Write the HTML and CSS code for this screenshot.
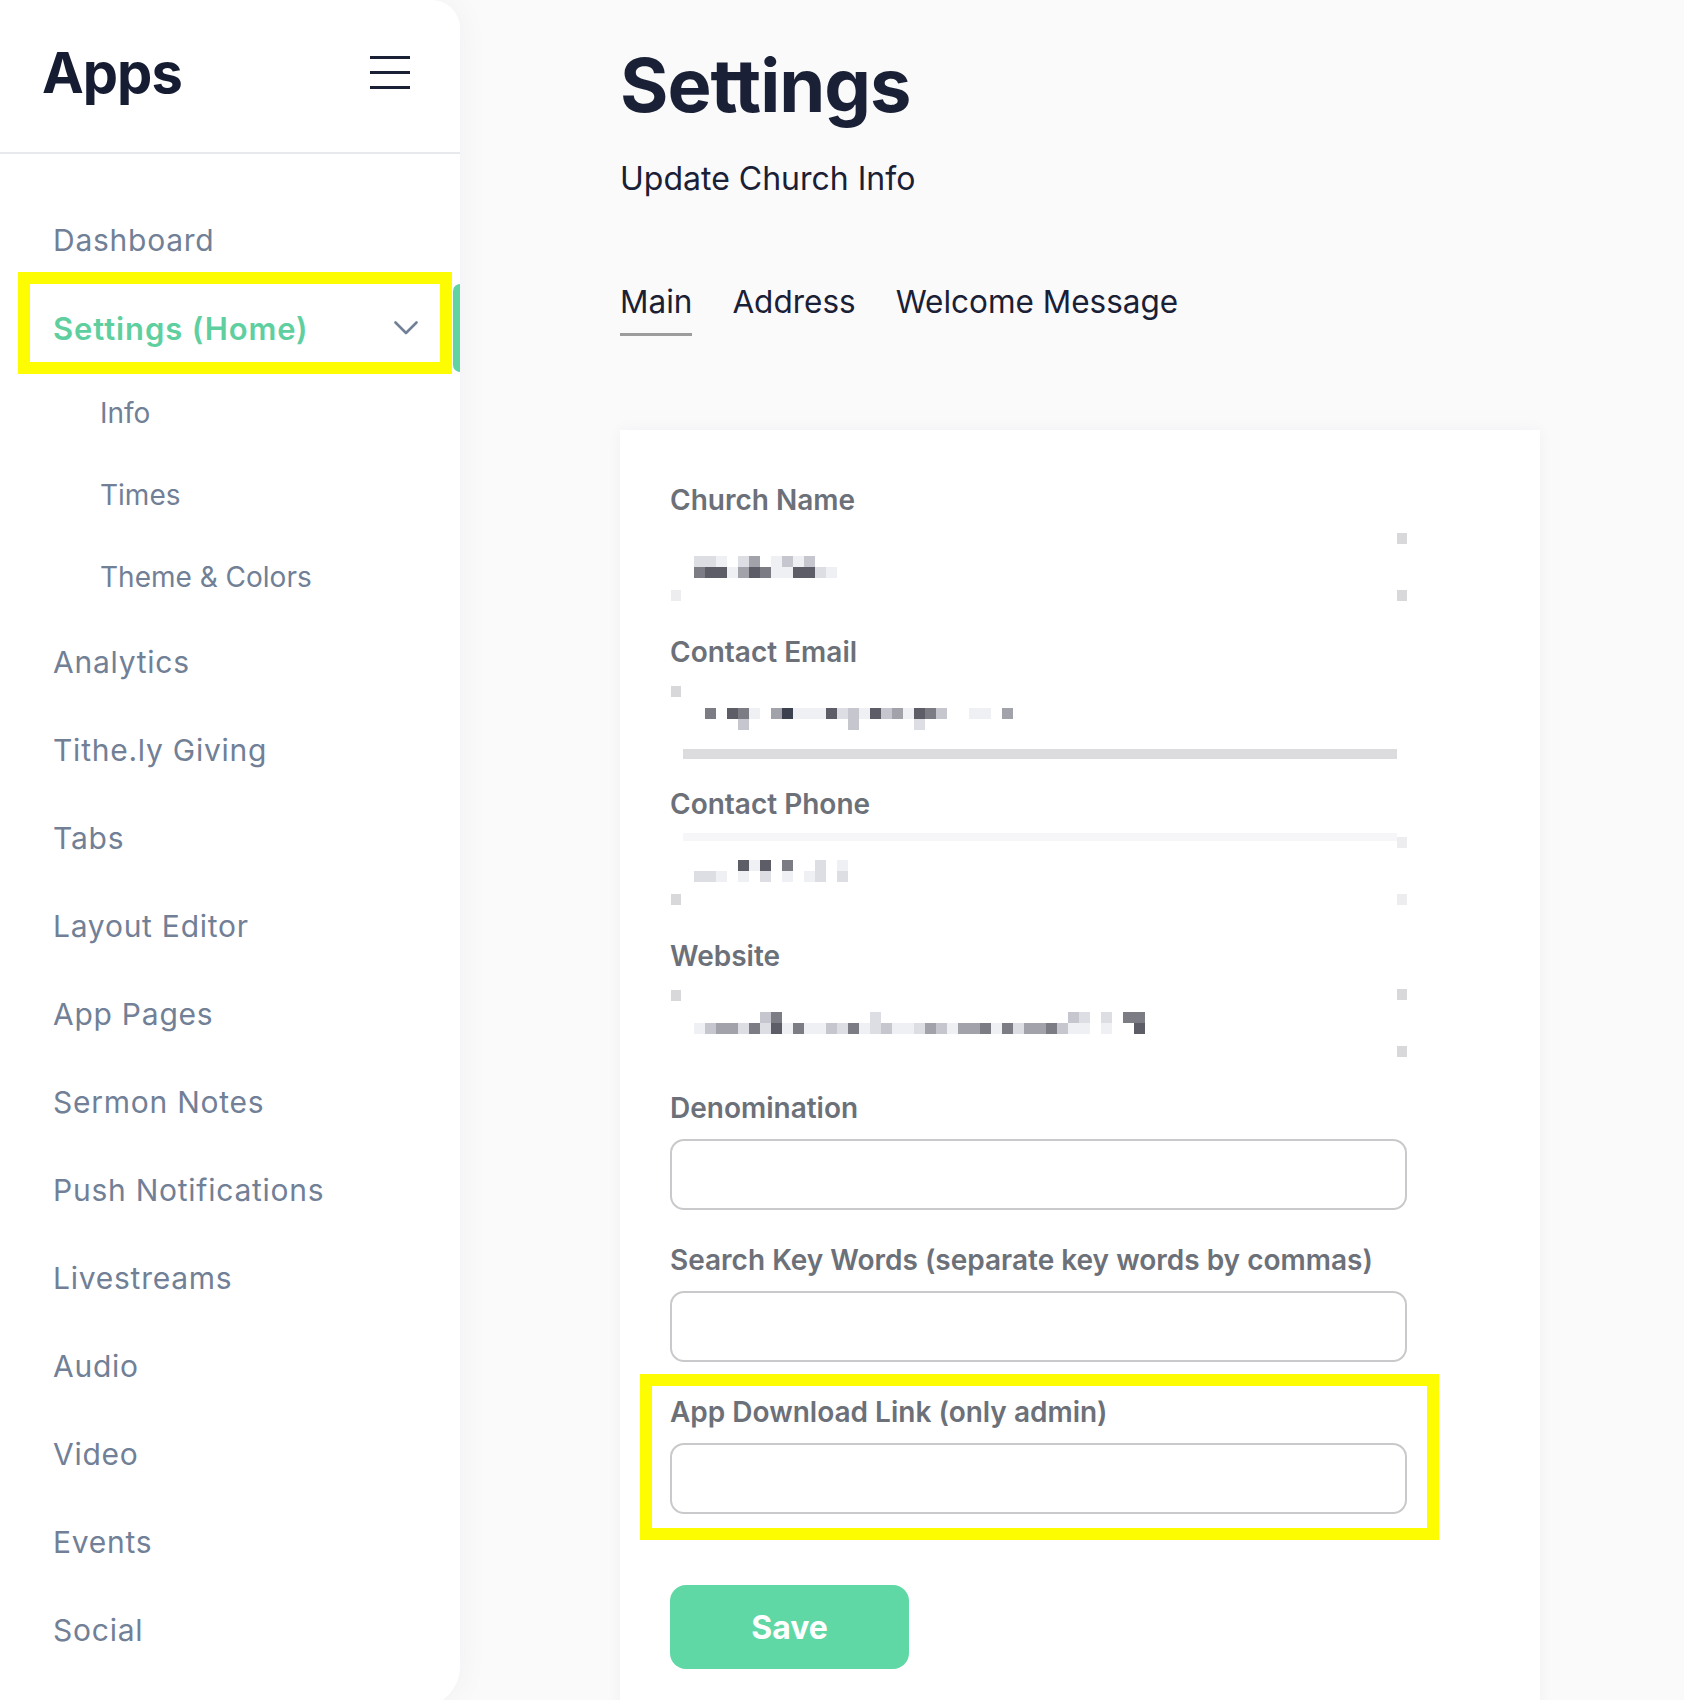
FILE: index.html
```html
<!DOCTYPE html>
<html lang="en">
<head>
  <meta charset="UTF-8">
  <title>Settings - Apps</title>
  <link rel="stylesheet" href="styles.css">
</head>
<body>
  <div id="sidebar">
    <div class="side-head">
      <h1>Apps</h1>
      <svg class="burger" width="40" height="34" viewBox="0 0 40 34">
        <path d="M0 1.5H40M0 16.5H40M0 31.5H40" stroke="#1a2035" stroke-width="3"/>
      </svg>
    </div>
    <ul class="nav">
      <li class="item">Dashboard</li>
      <li class="item active">
        <span>Settings (Home)</span>
        <svg class="chev" width="24" height="14" viewBox="0 0 24 14">
          <path d="M1.5 1.5L12 12L22.5 1.5" fill="none" stroke="#718096" stroke-width="2.6" stroke-linecap="round" stroke-linejoin="round"/>
        </svg>
      </li>
      <li class="sub">Info</li>
      <li class="sub">Times</li>
      <li class="sub">Theme &amp; Colors</li>
      <li class="item">Analytics</li>
      <li class="item">Tithe.ly Giving</li>
      <li class="item">Tabs</li>
      <li class="item">Layout Editor</li>
      <li class="item">App Pages</li>
      <li class="item">Sermon Notes</li>
      <li class="item">Push Notifications</li>
      <li class="item">Livestreams</li>
      <li class="item">Audio</li>
      <li class="item">Video</li>
      <li class="item">Events</li>
      <li class="item">Social</li>
    </ul>
  </div>

  <div id="main">
    <h2 class="title">Settings</h2>
    <p class="subtitle">Update Church Info</p>

    <div class="tabs">
      <span class="tab current">Main</span>
      <span class="tab">Address</span>
      <span class="tab">Welcome Message</span>
    </div>

    <div class="card">
      <div class="field">
        <label>Church Name</label>
        <div class="blurred">
          <div class="row">
            <i class="k5"></i><i class="k5"></i><i class="k6"></i><i></i><i class="k5"></i><i class="k3"></i><i></i><i class="k6"></i><i class="k4"></i><i class="k6"></i><i class="k4"></i>
          </div>
          <div class="row">
            <i class="k2"></i><i class="k1"></i><i class="k1"></i><i class="k6"></i><i class="k3"></i><i class="k1"></i><i class="k2"></i><i class="k6"></i><i class="k6"></i><i class="k1"></i><i class="k1"></i><i class="k5"></i><i class="k6"></i>
          </div>
          <b class="speck tr"></b><b class="speck br"></b><b class="speck bl faint"></b>
        </div>
      </div>

      <div class="field">
        <label>Contact Email</label>
        <div class="blurred email">
          <div class="row">
            <i></i><i class="k2"></i><i></i><i class="k1"></i><i class="k2"></i><i class="k6"></i><i></i><i class="k3"></i><i class="k0"></i><i class="k6"></i><i class="k6"></i><i class="k6"></i><i class="k1"></i><i class="k5"></i><i class="k4"></i><i class="k6"></i><i class="k1"></i><i class="k4"></i><i class="k3"></i><i class="k6"></i><i class="k1"></i><i class="k2"></i><i class="k4"></i><i></i><i></i><i class="k6"></i><i class="k6"></i><i></i><i class="k3"></i>
          </div>
          <div class="row">
            <i></i><i></i><i></i><i></i><i class="k4"></i><i></i><i></i><i></i><i></i><i></i><i></i><i></i><i></i><i></i><i class="k4"></i><i></i><i></i><i></i><i></i><i></i><i class="k5"></i>
          </div>
          <b class="speck tl"></b>
          <span class="bar"></span>
        </div>
      </div>

      <div class="field">
        <label>Contact Phone</label>
        <div class="blurred">
          <div class="row">
            <i></i><i></i><i></i><i></i><i class="k1"></i><i class="k6"></i><i class="k1"></i><i></i><i class="k2"></i><i></i><i></i><i class="k5"></i><i></i><i class="k6"></i>
          </div>
          <div class="row">
            <i class="k5"></i><i class="k5"></i><i class="k6"></i><i></i><i class="k6"></i><i></i><i class="k5"></i><i></i><i class="k6"></i><i></i><i class="k6"></i><i class="k5"></i><i></i><i class="k5"></i>
          </div>
          <b class="speck bl"></b><b class="speck tr faint"></b><b class="speck br faint"></b>
          <span class="topbar"></span>
        </div>
      </div>

      <div class="field">
        <label>Website</label>
        <div class="blurred">
          <div class="row">
            <i></i><i></i><i></i><i></i><i></i><i></i><i class="k4"></i><i class="k2"></i><i></i><i></i><i></i><i></i><i></i><i></i><i></i><i></i><i class="k5"></i><i></i><i></i><i></i><i></i><i></i><i></i><i></i><i></i><i></i><i></i><i></i><i></i><i></i><i></i><i></i><i></i><i></i><i class="k4"></i><i class="k5"></i><i></i><i class="k5"></i><i></i><i class="k2"></i><i class="k2"></i>
          </div>
          <div class="row">
            <i class="k6"></i><i class="k4"></i><i class="k3"></i><i class="k3"></i><i class="k5"></i><i class="k2"></i><i class="k5"></i><i class="k1"></i><i class="k6"></i><i class="k2"></i><i class="k6"></i><i class="k6"></i><i class="k4"></i><i class="k5"></i><i class="k2"></i><i class="k6"></i><i class="k5"></i><i class="k4"></i><i class="k6"></i><i class="k6"></i><i class="k5"></i><i class="k3"></i><i class="k4"></i><i class="k6"></i><i class="k3"></i><i class="k3"></i><i class="k2"></i><i class="k6"></i><i class="k2"></i><i class="k5"></i><i class="k3"></i><i class="k3"></i><i class="k2"></i><i class="k4"></i><i class="k6"></i><i class="k6"></i><i></i><i class="k6"></i><i></i><i></i><i class="k1"></i>
          </div>
          <b class="speck tl"></b><b class="speck tr"></b><b class="speck br"></b>
        </div>
      </div>

      <div class="field">
        <label for="denom">Denomination</label>
        <input id="denom" type="text">
      </div>

      <div class="field">
        <label for="keywords">Search Key Words (separate key words by commas)</label>
        <input id="keywords" type="text">
      </div>

      <div class="field marked">
        <label for="dl">App Download Link (only admin)</label>
        <input id="dl" type="text">
      </div>

      <button class="save">Save</button>
    </div>
  </div>
</body>
</html>
```
FILE: styles.css
```css
html, body {
  height: 1700px;
  overflow: hidden;
}
body {
  margin: 0;
  display: flex;
  align-items: flex-start;
  font-family: Inter, "Noto Sans", sans-serif;
  background-color: #fafafb;
  color: #1a2035;
}

/* sidebar */
#sidebar {
  width: 460px;
  height: 1707px;
  flex-shrink: 0;
  background: #fff;
  border-radius: 0 28px 40px 0;
  box-shadow: 4px 0 30px rgba(30, 40, 60, 0.035);
}
.side-head {
  height: 154px;
  box-sizing: border-box;
  padding: 0 50px 6px 42px;
  display: flex;
  align-items: center;
  justify-content: space-between;
  border-bottom: 2px solid #e8e9ec;
}
.side-head h1 {
  margin: 0;
  font-size: 56px;
  font-weight: 700;
  letter-spacing: -1px;
  color: #161d33;
}
.burger {
  display: block;
}
.nav {
  list-style: none;
  margin: 0;
  padding: 42px 0 0;
}
.item {
  height: 88px;
  padding: 0 42px 0 53px;
  display: flex;
  align-items: center;
  justify-content: space-between;
  font-size: 30px;
  letter-spacing: 0.75px;
  color: #718096;
  position: relative;
}
.item.active {
  color: #5fcf9f;
  font-weight: 600;
  font-size: 31px;
  letter-spacing: 0.9px;
}
.item.active::before {
  content: "";
  position: absolute;
  right: 0;
  top: 0;
  width: 7px;
  height: 88px;
  background: #5fd3a0;
  border-radius: 7px 0 0 7px;
}
.item.active::after {
  content: "";
  position: absolute;
  left: 18px;
  top: -12px;
  width: 410px;
  height: 78px;
  border: 12px solid #fdfc00;
}
.chev {
  display: block;
}
.sub {
  height: 82px;
  padding-left: 100px;
  display: flex;
  align-items: center;
  font-size: 28px;
  color: #718096;
}

/* main column */
#main {
  padding-left: 160px;
}
.title {
  margin: 48px 0 0;
  font-size: 74px;
  line-height: 1;
  font-weight: 700;
  letter-spacing: -1px;
}
.subtitle {
  margin: 38px 0 0;
  font-size: 32px;
  line-height: 1.2;
}
.tabs {
  margin-top: 85px;
  display: flex;
  gap: 40px;
}
.tab {
  font-size: 31.5px;
  line-height: 1.2;
  padding-bottom: 12px;
  border-bottom: 3px solid transparent;
}
.tab.current {
  border-bottom-color: #9c9c9c;
}

.card {
  margin-top: 94px;
  width: 920px;
  height: 1400px;
  box-sizing: border-box;
  padding: 54px 0 0 50px;
  background: #fff;
  box-shadow: 0 0 14px rgba(30, 40, 60, 0.045);
}
.field {
  width: 737px;
  margin-bottom: 34px;
  position: relative;
}
.field label {
  display: block;
  font-size: 28px;
  line-height: 32px;
  font-weight: 600;
  color: #6c7079;
  margin-bottom: 15px;
}
.field input {
  display: block;
  width: 100%;
  height: 71px;
  box-sizing: border-box;
  border: 2px solid #c9c9cc;
  border-radius: 14px;
  font-size: 26px;
  font-family: inherit;
  padding: 0 20px;
  background: #fff;
}
.field.marked::after {
  content: "";
  position: absolute;
  left: -30px;
  top: -22px;
  width: 775px;
  height: 142px;
  border: 12px solid #fdfc00;
}

/* pixelated values */
.blurred {
  height: 71px;
  position: relative;
  padding-left: 24px;
  display: flex;
  flex-direction: column;
  justify-content: center;
}
.row {
  display: flex;
}
.row i {
  width: 11px;
  height: 11px;
}
.k0 { background: #3c4150; }
.k1 { background: #5c5d66; }
.k2 { background: #7b7c84; }
.k3 { background: #a2a3aa; }
.k4 { background: #c6c7ce; }
.k5 { background: #dddee3; }
.k6 { background: #eff0f3; }
.speck {
  position: absolute;
  width: 10px;
  height: 11px;
  background: #d8d8db;
}
.speck.faint {
  background: #ededf0;
}
.speck.tr { right: 0; top: 2px; }
.speck.br { right: 0; bottom: 1px; }
.speck.tl { left: 1px; top: 3px; }
.speck.bl { left: 1px; bottom: 1px; }
.bar {
  position: absolute;
  left: 13px;
  right: 10px;
  bottom: -5px;
  height: 10px;
  background: #dcdcdf;
}
.topbar {
  position: absolute;
  left: 13px;
  right: 10px;
  top: -2px;
  height: 8px;
  background: #f6f6f8;
}

.save {
  margin-top: 37px;
  width: 239px;
  height: 84px;
  border: none;
  border-radius: 16px;
  background: #5fd8a6;
  color: #fff;
  font-family: inherit;
  font-size: 32px;
  font-weight: 700;
  cursor: pointer;
}
```
